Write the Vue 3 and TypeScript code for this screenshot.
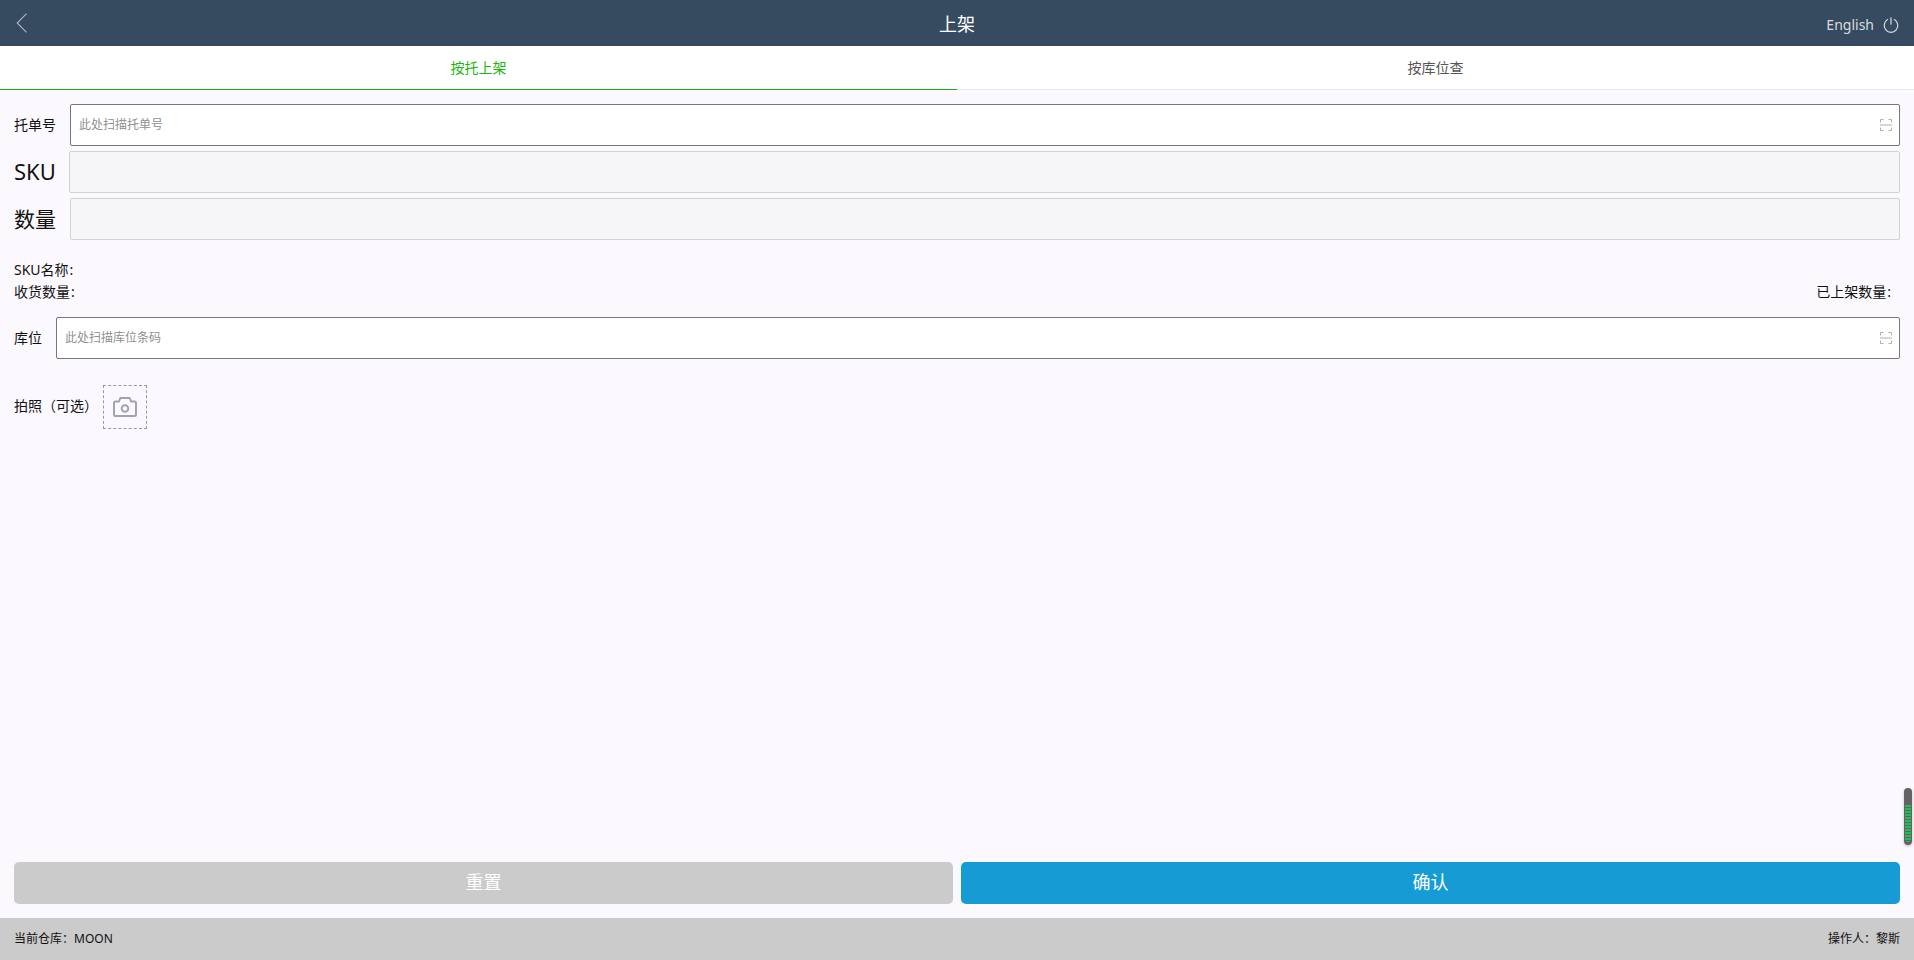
<script setup lang="ts">
import { ref } from 'vue'

const tabs = ['按托上架', '按库位查']
const activeTab = ref(0)
const palletNo = ref('')
const location = ref('')
</script>

<template>
  <div class="page">
    <header class="topbar">
      <button class="back" aria-label="back">
        <svg width="12" height="20" viewBox="0 0 12 20" fill="none">
          <path d="M10.500.7L1.200 10l9.300 9.300" stroke="#aeb7c0" stroke-width="1.100" />
        </svg>
      </button>
      <h1 class="title">上架</h1>
      <div class="top-right">
        <span class="lang">English</span>
        <svg width="16" height="16" viewBox="0 0 16 16" fill="none">
          <path d="M4.600 2.600a6.800 6.800 0 1 0 6.800 0" stroke="#d8dcdf" stroke-width="1.200" stroke-linecap="round" />
          <path d="M8 .8v6.400" stroke="#d8dcdf" stroke-width="1.200" stroke-linecap="round" />
        </svg>
      </div>
    </header>

    <nav class="tabs">
      <div
        v-for="(tab, index) in tabs"
        :key="tab"
        class="tab"
        :class="{ active: index === activeTab }"
        @click="activeTab = index"
      >
        {{ tab }}
      </div>
    </nav>

    <main class="content">
      <div class="form-row">
        <label class="label">托单号</label>
        <div class="field">
          <input v-model="palletNo" placeholder="此处扫描托单号" />
          <svg class="scan" width="12" height="12" viewBox="0 0 12 12" fill="none">
            <path d="M.5 3.500V.5h3M8.500.5h3v3M.5 8.500v3h3M8.500 11.500h3v-3" stroke="#b3aea6" />
            <path d="M0 6h12" stroke="#b3aea6" />
          </svg>
        </div>
      </div>
      <div class="form-row">
        <label class="label big sku">SKU</label>
        <div class="field disabled"></div>
      </div>
      <div class="form-row">
        <label class="label big qty">数量</label>
        <div class="field disabled"></div>
      </div>

      <div class="info">
        <div>SKU名称<span class="colon">:</span></div>
        <div class="info-line">
          <span>收货数量<span class="colon">:</span></span>
          <span class="done">已上架数量<span class="colon">:</span></span>
        </div>
      </div>

      <div class="form-row">
        <label class="label short">库位</label>
        <div class="field">
          <input v-model="location" placeholder="此处扫描库位条码" />
          <svg class="scan" width="12" height="12" viewBox="0 0 12 12" fill="none">
            <path d="M.5 3.500V.5h3M8.500.5h3v3M.5 8.500v3h3M8.500 11.500h3v-3" stroke="#b3aea6" />
            <path d="M0 6h12" stroke="#b3aea6" />
          </svg>
        </div>
      </div>

      <div class="photo-row">
        <span class="photo-label">拍照（可选）</span>
        <div class="photo-box">
          <svg width="24" height="20" viewBox="0 0 24 20" fill="none">
            <path
              d="M1 6a1.500 1.500 0 0 1 1.500-1.500H6L7.300 1h9.400L18 4.500h3.500A1.500 1.500 0 0 1 23 6V17.500a1.500 1.500 0 0 1-1.500 1.500h-19A1.500 1.500 0 0 1 1 17.500z"
              stroke="#a3a3a8"
              stroke-width="2"
              stroke-linejoin="round"
            />
            <circle cx="12" cy="11.500" r="3.300" stroke="#a3a3a8" stroke-width="2" />
          </svg>
        </div>
      </div>

      <div class="actions">
        <button class="btn reset">重置</button>
        <button class="btn confirm">确认</button>
      </div>
    </main>

    <footer class="footer">
      <span>当前仓库：MOON</span>
      <span>操作人：黎斯</span>
    </footer>

    <div class="float-meter"><div class="float-level"></div></div>
  </div>
</template>

<style>
html,
body {
  margin: 0;
  background: #fbf9fe;
}
</style>

<style scoped>
.page {
  position: relative;
  display: flex;
  flex-direction: column;
  height: 960px;
  overflow: hidden;
  background: #fbf9fe;
  color: #111;
  font-family: "Noto Sans", "Noto Sans CJK SC", sans-serif;
  font-size: 13px;
}

.topbar {
  display: flex;
  align-items: center;
  justify-content: space-between;
  flex-shrink: 0;
  height: 46px;
  padding: 0 15px 0 16px;
  background: #364b60;
  position: relative;
}

.back {
  display: flex;
  padding: 0;
  border: none;
  background: none;
}

.title {
  position: absolute;
  left: 0;
  right: 0;
  margin: 0;
  color: #fff;
  font-size: 18px;
  font-weight: 400;
  text-align: center;
  pointer-events: none;
}

.top-right {
  display: flex;
  align-items: center;
  gap: 9px;
  padding-top: 3px;
  color: #d8dcdf;
  font-size: 14px;
}

.tabs {
  display: flex;
  flex-shrink: 0;
  height: 44px;
  background: #fff;
}

.tab {
  flex: 1;
  display: flex;
  align-items: center;
  justify-content: center;
  box-sizing: border-box;
  padding-bottom: 2px;
  border-bottom: 1px solid #e6e6e6;
  color: #555;
  font-size: 14px;
}

.tab.active {
  border-bottom-color: #1aad19;
  color: #1eb70f;
}

.content {
  flex: 1;
  display: flex;
  flex-direction: column;
  min-height: 0;
  padding: 14px 14px 14px;
}

.form-row {
  display: flex;
  align-items: center;
  height: 42px;
  margin-bottom: 5px;
}

.label {
  flex-shrink: 0;
  width: 56px;
  padding-bottom: 2px;
  color: #111;
  font-size: 14px;
}

.label.big {
  font-size: 22px;
  line-height: 1;
}

.label.sku {
  width: 55px;
}

.label.qty {
  padding-bottom: 0;
  font-size: 21px;
}

.label.short {
  width: 42px;
}

.field {
  flex: 1;
  display: flex;
  align-items: center;
  box-sizing: border-box;
  height: 42px;
  padding: 0 8px;
  border: 1px solid #77777b;
  border-radius: 2px;
  background: #fff;
}

.field.disabled {
  border-color: #d2d2d6;
  background: #f6f6f8;
}

.field input {
  flex: 1;
  min-width: 0;
  padding: 0 0 2px;
  border: none;
  outline: none;
  background: transparent;
  font: inherit;
  font-size: 12px;
}

.field input::placeholder {
  color: #8f8f8f;
  opacity: 1;
}

.scan {
  flex-shrink: 0;
  margin-right: -1px;
}

.info {
  margin: 14px 0;
  font-size: 14px;
  line-height: 22px;
}

.info-line {
  display: flex;
  justify-content: space-between;
}

.colon {
  margin: 0 1px;
}

.done {
  margin-right: 8px;
}

.photo-row {
  display: flex;
  align-items: center;
  margin-top: 21px;
  font-size: 14px;
}

.photo-label {
  width: 89px;
  padding-bottom: 4px;
}

.photo-box {
  display: flex;
  align-items: center;
  justify-content: center;
  box-sizing: border-box;
  width: 44px;
  height: 44px;
  border: 1px dashed #999;
}

.actions {
  display: flex;
  gap: 8px;
  margin-top: auto;
}

.btn {
  flex: 1;
  height: 42px;
  padding: 0 0 4px;
  border: none;
  border-radius: 5px;
  color: #fff;
  font: inherit;
  font-size: 18px;
}

.reset {
  background: #cbcbcb;
}

.confirm {
  background: #169bd5;
}

.footer {
  display: flex;
  align-items: center;
  justify-content: space-between;
  flex-shrink: 0;
  height: 42px;
  padding: 0 14px 2px;
  box-sizing: border-box;
  background: #cbcbcb;
  color: #111;
  font-size: 12px;
}

.float-meter {
  position: absolute;
  right: 2px;
  top: 788px;
  box-sizing: border-box;
  width: 8px;
  height: 57px;
  padding-top: 17px;
  border-radius: 4px;
  background: #636366;
  box-shadow: 0 1px 3px rgba(0, 0, 0, 0.25);
}

.float-level {
  height: 37px;
  margin: 0 1px;
  border-radius: 0 0 3px 3px;
  background: repeating-linear-gradient(#1fbf55 0 2px, #636366 2px 3px);
}
</style>
